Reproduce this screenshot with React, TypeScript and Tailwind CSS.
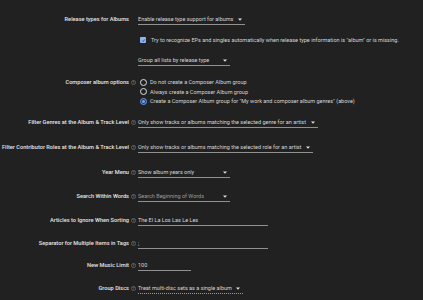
import React from "react";

const Help = () => (
  <svg width="5" height="5" viewBox="0 0 10 10" className="shrink-0">
    <circle cx="5" cy="5" r="4.2" fill="none" stroke="#8a8a8a" strokeWidth="1.1" />
    <path d="M3.7 3.9a1.3 1.3 0 1 1 1.9 1.1c-.5.3-.6.5-.6 1" fill="none" stroke="#8a8a8a" strokeWidth="1" />
    <circle cx="5" cy="7.4" r=".6" fill="#8a8a8a" />
  </svg>
);

const Arrow = () => (
  <svg width="4" height="3" viewBox="0 0 4 3" className="shrink-0">
    <path d="M0 0.5h4L2 2.8z" fill="#e0e0e0" />
  </svg>
);

function Label({ text, help = true }: { text: string; help?: boolean }) {
  return (
    <div className="flex items-center h-[8px] shrink-0">
      <div className="w-[129px] text-right font-medium text-[#e6e6e6] whitespace-nowrap leading-[8px] text-[5.65px]">
        {text}
      </div>
      <div className="w-[9px] flex justify-center">{help ? <Help /> : null}</div>
    </div>
  );
}

function Select({ text, w, muted = false, dotted = false }: { text: string; w: string; muted?: boolean; dotted?: boolean }) {
  return (
    <div
      className={`${w} flex items-center justify-between pr-[3px] h-[10px] pb-[1px] border-b ${
        dotted ? "border-dotted border-[#9a9a9a]" : "border-[#909090]"
      }`}
    >
      <span className={`leading-[8px] whitespace-nowrap ${muted ? "text-[#9c9c9c]" : "text-[#d6d6d6]"}`}>{text}</span>
      <Arrow />
    </div>
  );
}

function Input({ text, w }: { text: string; w: string }) {
  return (
    <div className={`${w} h-[10px] pb-[1px] border-b border-[#909090] flex items-center`}>
      <span className="leading-[8px] whitespace-nowrap text-[#d6d6d6]">{text}</span>
    </div>
  );
}

function Radio({ checked, text }: { checked?: boolean; text: string }) {
  return (
    <div className="flex items-center h-[8px]">
      <div className="w-[13px] flex justify-start pl-[3px]">
        {checked ? (
          <div className="w-[7px] h-[7px] rounded-full border border-[#6b9bf0] flex items-center justify-center bg-[#2a3550]">
            <div className="w-[3px] h-[3px] rounded-full bg-[#7aa7f5]" />
          </div>
        ) : (
          <div className="w-[7px] h-[7px] rounded-full border border-[#e0e0e0]" />
        )}
      </div>
      <span className="leading-[8px] whitespace-nowrap text-[#d6d6d6]">{text}</span>
    </div>
  );
}

export default function App() {
  return (
    <div
      className="w-[423px] h-[300px] bg-[#212121] overflow-hidden text-[5.5px] flex flex-col pt-[15px]"
      style={{ fontFamily: "Roboto, 'Liberation Sans', sans-serif" }}
    >
      <div className="flex items-start">
        <Label text="Release types for Albums" help={false} />
        <Select text="Enable release type support for albums" w="w-[107px]" />
      </div>

      <div className="flex items-center mt-[11px] h-[8px] pl-[140px]">
        <div className="w-[6px] h-[6px] rounded-[1px] bg-[#8fb4f0] flex items-center justify-center mr-[5px]">
          <svg width="5" height="5" viewBox="0 0 10 10">
            <path d="M2 5.2l2 2 4-4.5" fill="none" stroke="#1d3f7a" strokeWidth="1.6" />
          </svg>
        </div>
        <span className="leading-[8px] whitespace-nowrap text-[#d6d6d6]">
          Try to recognize EPs and singles automatically when release type information is "album" or is missing.
        </span>
      </div>

      <div className="flex items-start mt-[12px] pl-[138px]">
        <Select text="Group all lists by release type" w="w-[92px]" />
      </div>

      <div className="flex items-start mt-[12px]">
        <Label text="Composer album options" />
        <div className="flex flex-col gap-[1.5px] -ml-[1px]">
          <Radio text="Do not create a Composer Album group" />
          <Radio text="Always create a Composer Album group" />
          <Radio checked text={'Create a Composer Album group for "My work and composer album genres" (above)'} />
        </div>
      </div>

      <div className="flex items-start mt-[13px]">
        <Label text="Filter Genres at the Album & Track Level" />
        <Select text="Only show tracks or albums matching the selected genre for an artist" w="w-[180px]" />
      </div>

      <div className="flex items-start mt-[15px]">
        <Label text="Filter Contributor Roles at the Album & Track Level" />
        <Select text="Only show tracks or albums matching the selected role for an artist" w="w-[175px]" />
      </div>

      <div className="flex items-start mt-[15px]">
        <Label text="Year Menu" />
        <Select text="Show album years only" w="w-[92px]" />
      </div>

      <div className="flex items-start mt-[14px]">
        <Label text="Search Within Words" />
        <Select text="Search Beginning of Words" w="w-[92px]" muted />
      </div>

      <div className="flex items-start mt-[14px]">
        <Label text="Articles to Ignore When Sorting" />
        <Input text="The El La Los Las Le Les" w="w-[130px]" />
      </div>

      <div className="flex items-start mt-[13px]">
        <Label text="Separator for Multiple Items in Tags" />
        <Input text=";" w="w-[130px]" />
      </div>

      <div className="flex items-start mt-[12px]">
        <Label text="New Music Limit" />
        <Input text="100" w="w-[53px]" />
      </div>

      <div className="flex items-start mt-[13px]">
        <Label text="Group Discs" />
        <Select text="Treat multi-disc sets as a single album" w="w-[105px]" dotted />
      </div>
    </div>
  );
}
